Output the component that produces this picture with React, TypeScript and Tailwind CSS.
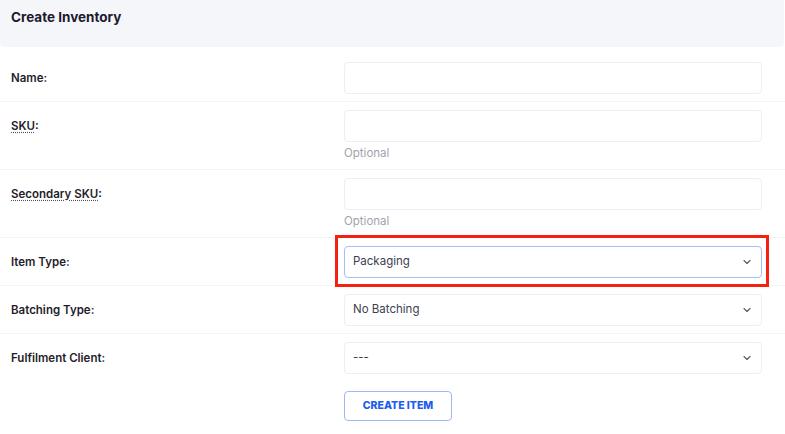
import { ChevronDown } from "lucide-react";

const font = { fontFamily: "Inter, 'Noto Sans', sans-serif" };

function Label({ children, abbr }: { children: React.ReactNode; abbr?: boolean }) {
  return (
    <div className="w-[344px] shrink-0 pl-[11px] pt-[8px] text-[11.5px] font-semibold text-[#1f1d2b]">
      {abbr ? (
        <span className="underline decoration-dotted decoration-[#555] underline-offset-2">{children}</span>
      ) : (
        children
      )}
      :
    </div>
  );
}

function Row({ children, last }: { children: React.ReactNode; last?: boolean }) {
  return (
    <div className={`flex pr-[23px] pt-[8px] ${last ? "" : "border-b border-[#f4f5f8] pb-[7px]"}`}>
      {children}
    </div>
  );
}

function TextField() {
  return <div className="h-[32px] w-full rounded-[4px] border border-[#eceef4] bg-white" />;
}

function Hint() {
  return <p className="mt-[2px] h-[18px] text-[11.5px] leading-[18px] text-[#a0a3ac]">Optional</p>;
}

function Select({ value, active }: { value: string; active?: boolean }) {
  return (
    <div
      className={`flex h-[32px] w-full items-center justify-between rounded-[4px] border bg-white pl-[8px] pr-[8px] text-[11.5px] text-[#3d4051] ${
        active ? "border-[#a9bdf5]" : "border-[#eceef4]"
      }`}
    >
      <span>{value}</span>
      <ChevronDown size={12} strokeWidth={2.2} className="text-[#555a6b]" />
    </div>
  );
}

export default function App() {
  return (
    <main className="min-h-screen w-[785px] bg-white" style={font}>
      <header className="h-[47px] w-[784px] rounded-b-[4px] bg-[#f5f6fa] pl-[11px] pt-[7px]">
        <h1 className="text-[13.5px] font-bold text-[#1c1a2e]">Create Inventory</h1>
      </header>

      <form className="pt-[7px]">
        <Row>
          <Label>Name</Label>
          <div className="flex-1">
            <TextField />
          </div>
        </Row>

        <Row>
          <Label abbr>SKU</Label>
          <div className="flex-1">
            <TextField />
            <Hint />
          </div>
        </Row>

        <Row>
          <Label abbr>Secondary SKU</Label>
          <div className="flex-1">
            <TextField />
            <Hint />
          </div>
        </Row>

        <Row>
          <Label>Item Type</Label>
          <div className="relative flex-1">
            <Select value="Packaging" active />
            <div className="pointer-events-none absolute -bottom-[9px] -left-[9px] -right-[7px] -top-[11px] border-[3px] border-[#f5200f]" />
          </div>
        </Row>

        <Row>
          <Label>Batching Type</Label>
          <div className="flex-1">
            <Select value="No Batching" />
          </div>
        </Row>

        <Row last>
          <Label>Fulfilment Client</Label>
          <div className="flex-1">
            <Select value="---" />
            <button
              type="button"
              className="mt-[17px] h-[30px] w-[108px] rounded-[4px] border border-[#9db8f5] bg-white text-[10.5px] font-extrabold text-[#1b5cf0]"
            >
              CREATE ITEM
            </button>
          </div>
        </Row>
      </form>
    </main>
  );
}
